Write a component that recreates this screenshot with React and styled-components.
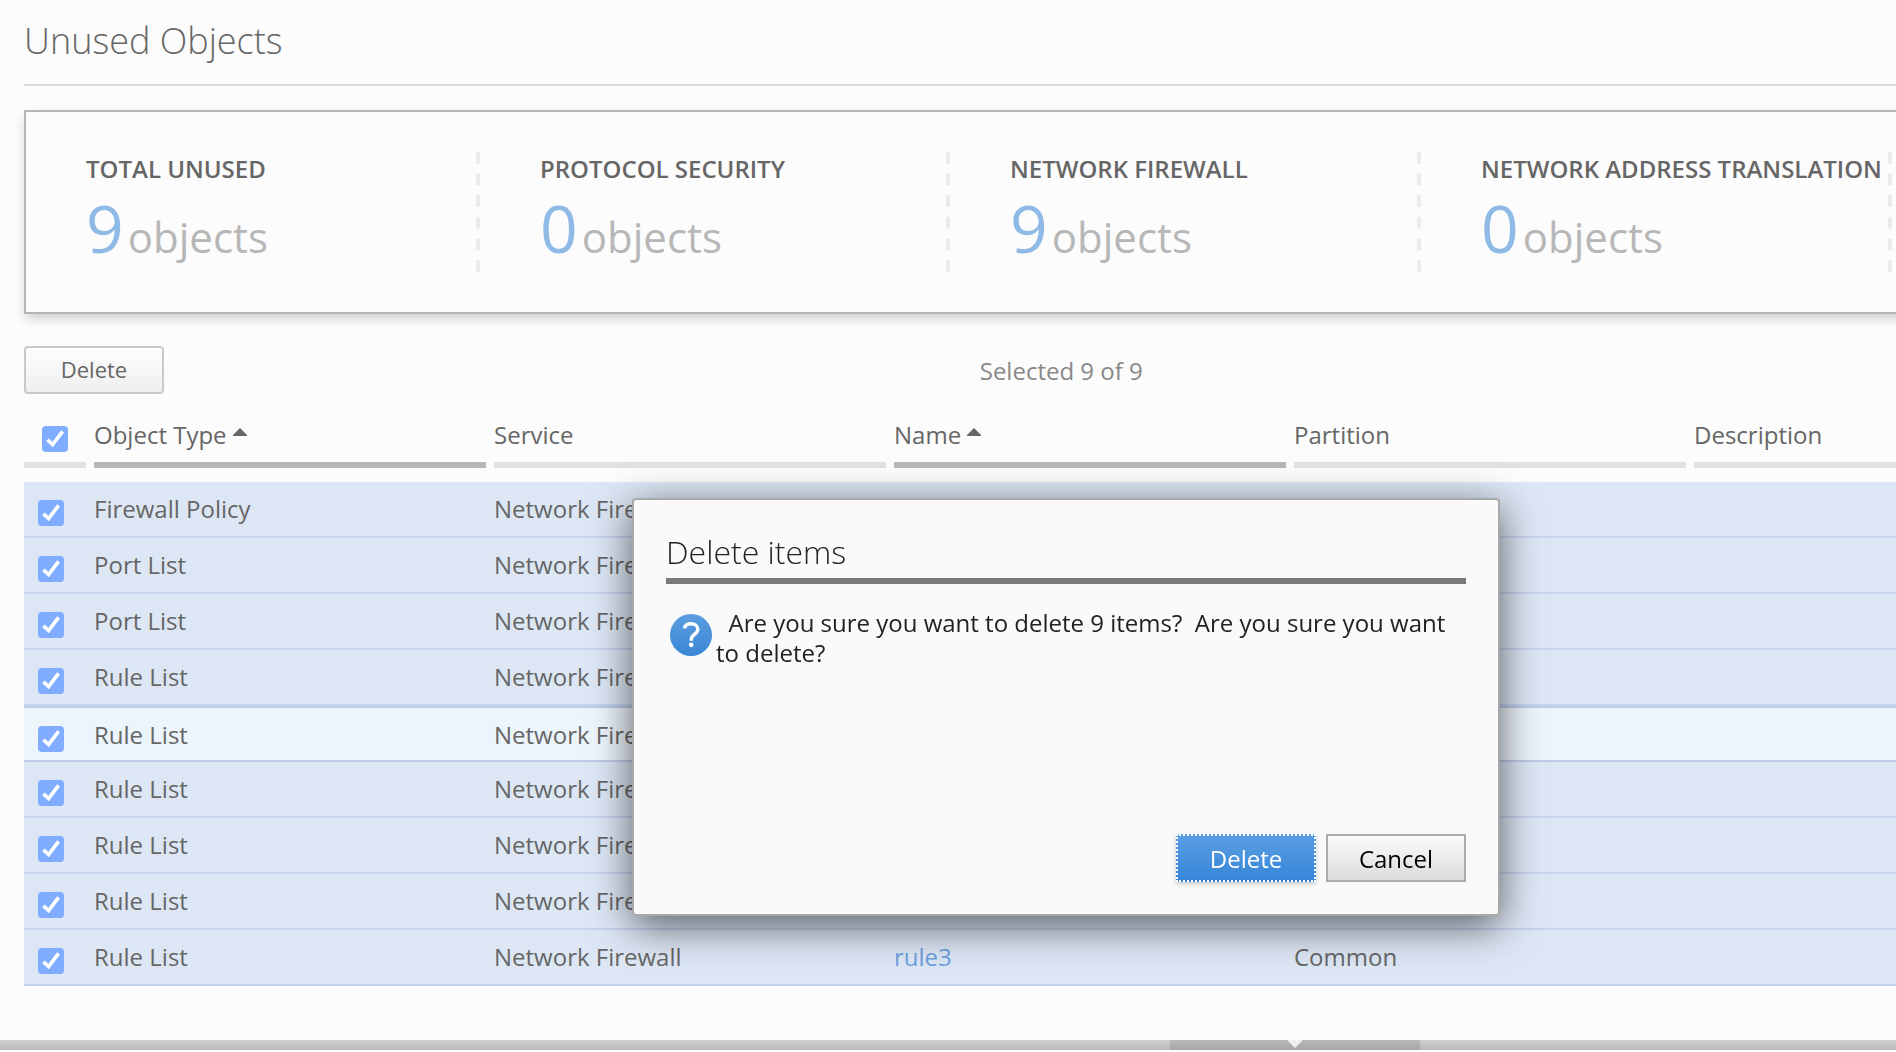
import React, { useState } from "react";
import styled, { createGlobalStyle, css } from "styled-components";

const GlobalStyle = createGlobalStyle`
  *, *::before, *::after { box-sizing: border-box; }
  body {
    margin: 0;
    background: #fcfcfc;
    color: #666;
    font-family: "Open Sans", "Noto Sans", sans-serif;
    font-size: 24px;
    line-height: 32px;
    overflow: hidden;
  }
  button, input { font: inherit; margin: 0; }
`;

const Page = styled.div`
  min-height: 100vh;
  display: flex;
  flex-direction: column;
  padding-bottom: 2px;
`;

const Content = styled.main`
  flex: 1;
  padding-left: 24px;
`;

const PageTitle = styled.h1`
  margin: 0 0 24px;
  padding: 17px 0 19px;
  border-bottom: 2px solid #d9d9d9;
  font-size: 36px;
  font-weight: 300;
  line-height: 48px;
`;

const Summary = styled.section`
  display: grid;
  grid-template-columns: 454fr 470fr 471fr 471fr 20px;
  height: 204px;
  margin-right: -16px;
  padding-top: 40px;
  border: 2px solid #b5b5b5;
  border-right: 0;
  box-shadow: 0 6px 12px -2px rgba(0, 0, 0, 0.2);
`;

const Stat = styled.div`
  height: 128px;
  min-width: 0;
  padding-left: 60px;
  background: linear-gradient(#eceaea 12px, transparent 12px) right top / 4px 20px;
  background-repeat: no-repeat space;
`;

const StatLabel = styled.h2`
  margin: 0;
  font-size: 24px;
  font-weight: 600;
  line-height: 34px;
  white-space: nowrap;
`;

const StatValue = styled.p`
  display: flex;
  align-items: baseline;
  gap: 4px;
  margin: 0;
  font-size: 42px;
  line-height: 82px;
  color: #b7b7b7;
`;

const Count = styled.span`
  font-size: 66px;
  color: #90bae6;
`;

const Toolbar = styled.div`
  display: grid;
  grid-template-columns: 51% 1fr;
  align-items: center;
  margin-top: 32px;
`;

const Status = styled.output`
  padding: 2px 0 0 1px;
  color: #888;
`;

const Button = styled.button`
  width: 140px;
  height: 48px;
  padding: 2px 0 0;
  color: #000;
  background: linear-gradient(#fbfbfb, #dcdcdc);
  border: 2px solid #adadad;

  ${({ $kind }) =>
    $kind === "muted" &&
    css`
      padding: 0 0 2px;
      color: #666;
      font-size: 22px;
      border-color: #c9c9c9;
      border-radius: 4px;
      background: linear-gradient(#fdfdfd, #efefef);
    `}

  ${({ $kind }) =>
    $kind === "primary" &&
    css`
      color: #fff;
      border: 2px dotted #fff;
      background: linear-gradient(#5b9fe3, #3585d8) border-box;
      box-shadow: 0 2px 4px rgba(0, 0, 0, 0.2);
    `}
`;

const Table = styled.table`
  width: 100%;
  margin-top: 14px;
  table-layout: fixed;
  border-spacing: 0;
`;

const HeadCell = styled.th`
  width: ${({ $width }) => $width || "auto"};
  padding: 0 8px 14px 0;
  font-weight: 400;
  text-align: left;
  vertical-align: bottom;

  &:last-child { padding-right: 0; }
`;

const HeadLabel = styled.div`
  display: flex;
  align-items: flex-start;
  height: 60px;
  padding: ${({ $check }) => ($check ? "18px 0 0 18px" : "11px 0 0")};
  border-bottom: 6px solid ${({ $sorted }) => ($sorted ? "#b7b7b7" : "#e2e2e2")};
`;

const SortIcon = styled.svg`
  width: 14px;
  height: 8px;
  margin: 9px 0 0 6px;
  fill: #666;
`;

const Cell = styled.td`
  height: 56px;
  padding: 11px 0 0;
  vertical-align: top;
  white-space: nowrap;
  background: #dde6f5;
  border-bottom: 2px solid #c6d3ee;
`;

const CheckCell = styled(Cell)`
  padding: 18px 0 0 14px;
`;

const Row = styled.tr`
  ${({ $hover }) =>
    $hover &&
    css`
      ${Cell} {
        background: #ecf4fc;
        border-top: 2px solid #bccbe8;
        border-bottom-color: #bccbe8;
      }
    `}
`;

const tick =
  "url(\"data:image/svg+xml,%3Csvg xmlns='http://www.w3.org/2000/svg' viewBox='0 0 26 26'%3E%3Cpath d='M5.4 13.8 10.6 18.6 20.6 5.4' fill='none' stroke='white' stroke-width='3.6'/%3E%3C/svg%3E\")";

const Check = styled.input`
  display: block;
  appearance: none;
  width: 26px;
  height: 26px;
  border: 2px solid #aaa;
  border-radius: 4px;
  background: #fff;

  &:checked {
    border: 0;
    background: #80adff ${tick};
  }
`;

const Link = styled.a`
  color: #6f9fdf;
  text-decoration: none;
`;

const SplitBar = styled.footer`
  display: flex;
  height: 10px;
  background: linear-gradient(#cfcfcf, #b9b9b9);
`;

const Spacer = styled.div`
  flex: ${({ $grow }) => $grow} 1 0;
`;

const Grip = styled.button`
  display: flex;
  justify-content: center;
  width: 250px;
  height: 10px;
  padding: 0;
  border: 0;
  background: linear-gradient(#b9b9b9, #a6a6a6);
`;

const GripIcon = styled.svg`
  width: 14px;
  height: 8px;
  fill: #f0f0f0;
`;

const Overlay = styled.div`
  position: fixed;
  inset: 0;
  display: flex;
  justify-content: center;
  align-items: flex-start;
  padding: 498px 0 0 236px;
`;

const Dialog = styled.section`
  display: flex;
  flex-direction: column;
  width: 868px;
  height: 418px;
  padding: 32px;
  color: #222;
  background: #fafafa;
  border: 2px solid #a8a8a8;
  border-radius: 4px;
  box-shadow: 0 10px 40px rgba(0, 0, 0, 0.6);
`;

const DialogTitle = styled.h2`
  margin: 0;
  padding-bottom: 6px;
  border-bottom: 6px solid #7a7a7a;
  font-size: 32px;
  font-weight: 300;
  line-height: 40px;
`;

const DialogBody = styled.div`
  flex: 1;
  display: flex;
  padding: 24px 0 0 4px;
`;

const Message = styled.p`
  margin: 0 0 0 4px;
  line-height: 30px;
`;

const DialogIcon = styled.svg`
  flex: none;
  width: 42px;
  height: 42px;
  margin-top: 6px;
`;

const Actions = styled.div`
  display: flex;
  justify-content: flex-end;
  gap: 10px;
`;

const stats = [
  { label: "TOTAL UNUSED", count: 9 },
  { label: "PROTOCOL SECURITY", count: 0 },
  { label: "NETWORK FIREWALL", count: 9 },
  { label: "NETWORK ADDRESS TRANSLATION", count: 0 },
];

const columns = [
  { label: "Object Type", width: "400px", sorted: true },
  { label: "Service", width: "400px" },
  { label: "Name", width: "400px", sorted: true },
  { label: "Partition", width: "400px" },
  { label: "Description" },
];

const rows = [
  { type: "Firewall Policy" },
  { type: "Port List" },
  { type: "Port List" },
  { type: "Rule List" },
  { type: "Rule List", hover: true },
  { type: "Rule List" },
  { type: "Rule List" },
  { type: "Rule List" },
  { type: "Rule List", name: "rule3", partition: "Common" },
];

function QuestionIcon() {
  return (
    <DialogIcon viewBox="0 0 42 42" aria-hidden="true">
      <defs>
        <linearGradient id="questionFill" x1="0" y1="0" x2="0" y2="1">
          <stop offset="0" stopColor="#5b9ddf" />
          <stop offset="1" stopColor="#3a86d6" />
        </linearGradient>
      </defs>
      <circle cx="21" cy="21" r="21" fill="url(#questionFill)" />
      <path
        d="M14.4 14.4C15 11.400 17.600 9.800 21 9.800c4 0 6.800 2 6.800 5.400 0 2.700-1.700 4-3.500 5.300-2 1.500-3 2.500-3 5v1.300"
        fill="none"
        stroke="#fff"
        strokeWidth="3.4"
      />
      <circle cx="21.200" cy="30.800" r="2.400" fill="#fff" />
    </DialogIcon>
  );
}

export default function App() {
  const [checked, setChecked] = useState(rows.map(() => true));
  const selected = checked.filter(Boolean).length;
  const toggle = (i) => setChecked(checked.map((c, j) => (j === i ? !c : c)));

  return (
    <>
      <GlobalStyle />
      <Page>
        <Content>
          <PageTitle>Unused Objects</PageTitle>
          <Summary>
            {stats.map((s) => (
              <Stat key={s.label}>
                <StatLabel>{s.label}</StatLabel>
                <StatValue>
                  <Count>{s.count}</Count>
                  <span>objects</span>
                </StatValue>
              </Stat>
            ))}
          </Summary>
          <Toolbar>
            <Button type="button" $kind="muted">Delete</Button>
            <Status>Selected {selected} of {rows.length}</Status>
          </Toolbar>
          <Table>
            <thead>
              <tr>
                <HeadCell $width="70px">
                  <HeadLabel $check>
                    <Check
                      type="checkbox"
                      aria-label="Select all"
                      checked={selected === rows.length}
                      onChange={(e) => setChecked(rows.map(() => e.target.checked))}
                    />
                  </HeadLabel>
                </HeadCell>
                {columns.map((c) => (
                  <HeadCell key={c.label} $width={c.width}>
                    <HeadLabel $sorted={c.sorted}>
                      {c.label}
                      {c.sorted && (
                        <SortIcon viewBox="0 0 14 8" aria-hidden="true">
                          <path d="M7 0 14 7V8H0V7Z" />
                        </SortIcon>
                      )}
                    </HeadLabel>
                  </HeadCell>
                ))}
              </tr>
            </thead>
            <tbody>
              {rows.map((r, i) => (
                <Row key={i} $hover={r.hover}>
                  <CheckCell>
                    <Check
                      type="checkbox"
                      aria-label={`Select row ${i + 1}`}
                      checked={checked[i]}
                      onChange={() => toggle(i)}
                    />
                  </CheckCell>
                  <Cell>{r.type}</Cell>
                  <Cell>Network Firewall</Cell>
                  <Cell>{r.name && <Link href="#rule">{r.name}</Link>}</Cell>
                  <Cell>{r.partition}</Cell>
                  <Cell />
                </Row>
              ))}
            </tbody>
          </Table>
        </Content>
        <SplitBar>
          <Spacer $grow={1170} />
          <Grip type="button" aria-label="Toggle details">
            <GripIcon viewBox="0 0 14 8" aria-hidden="true">
              <path d="M0 0H14V1L7 8 0 1Z" />
            </GripIcon>
          </Grip>
          <Spacer $grow={476} />
        </SplitBar>
      </Page>
      <Overlay>
        <Dialog role="dialog" aria-labelledby="dialog-title">
          <DialogTitle id="dialog-title">Delete items</DialogTitle>
          <DialogBody>
            <QuestionIcon />
            <Message>
              &nbsp; Are you sure you want to delete 9 items?&nbsp; Are you sure you want to delete?
            </Message>
          </DialogBody>
          <Actions>
            <Button type="button" $kind="primary">Delete</Button>
            <Button type="button">Cancel</Button>
          </Actions>
        </Dialog>
      </Overlay>
    </>
  );
}
